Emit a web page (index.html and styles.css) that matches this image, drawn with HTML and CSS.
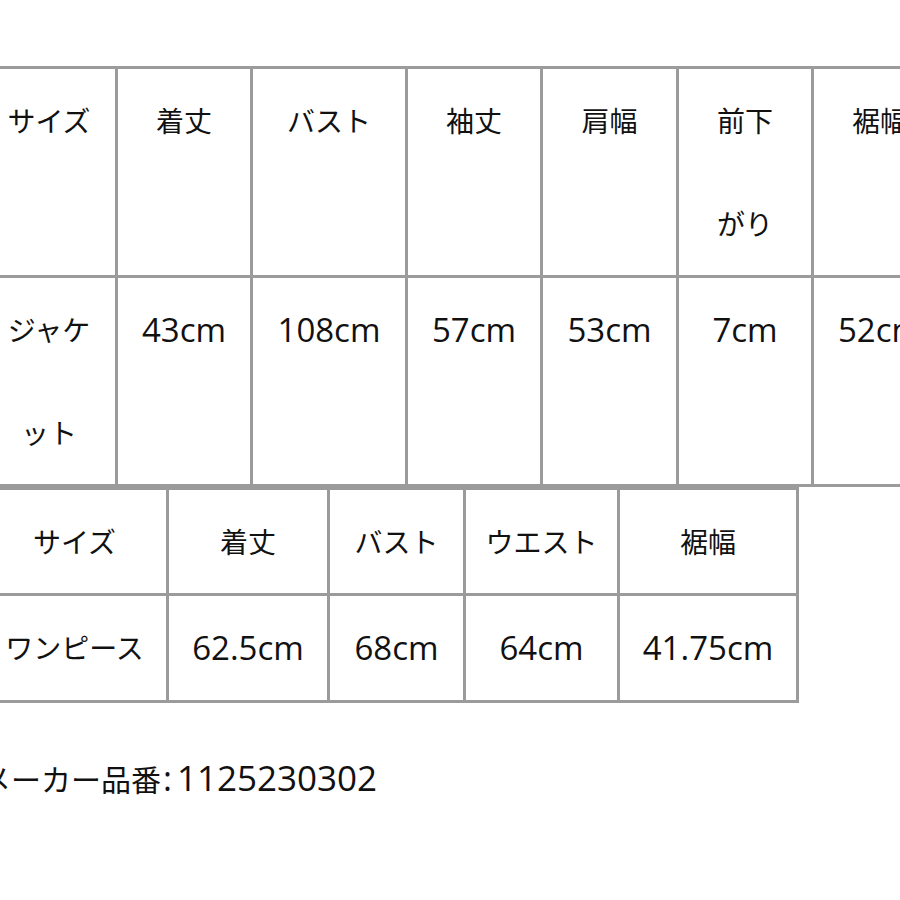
FILE: index.html
```html
<!DOCTYPE html>
<html lang="ja">
<head>
<meta charset="utf-8">
<title>サイズ表</title>
<link rel="stylesheet" href="styles.css">
</head>
<body>
<div class="page">
  <div class="grid grid-jacket">
    <div class="cell">サイズ</div>
    <div class="cell">着丈</div>
    <div class="cell">バスト</div>
    <div class="cell">袖丈</div>
    <div class="cell">肩幅</div>
    <div class="cell">前下<br>がり</div>
    <div class="cell">裾幅</div>
    <div class="cell">ジャケ<br>ット</div>
    <div class="cell"><span class="n">43cm</span></div>
    <div class="cell"><span class="n">108cm</span></div>
    <div class="cell"><span class="n">57cm</span></div>
    <div class="cell"><span class="n">53cm</span></div>
    <div class="cell"><span class="n">7cm</span></div>
    <div class="cell"><span class="n">52cm</span></div>
  </div>
  <div class="grid grid-dress">
    <div class="cell">サイズ</div>
    <div class="cell">着丈</div>
    <div class="cell">バスト</div>
    <div class="cell">ウエスト</div>
    <div class="cell">裾幅</div>
    <div class="cell">ワンピース</div>
    <div class="cell"><span class="n">62.5cm</span></div>
    <div class="cell"><span class="n">68cm</span></div>
    <div class="cell"><span class="n">64cm</span></div>
    <div class="cell"><span class="n">41.75cm</span></div>
  </div>
  <p class="maker">メーカー品番<span class="n colon">:</span><span class="n code">1125230302</span></p>
</div>
</body>
</html>
```

FILE: styles.css
```css
html, body {
  margin: 0;
  padding: 0;
  background: #fff;
  overflow: hidden;
}

body {
  width: 900px;
  height: 900px;
  font-family: "Noto Sans CJK JP", "DejaVu Sans", sans-serif;
  color: #111;
}

.page {
  padding-top: 66px;
  margin-left: -20px;
  width: 1000px;
}

.grid {
  display: grid;
  border-top: 3px solid #9b9b9b;
  border-left: 3px solid #9b9b9b;
  width: max-content;
}

.grid-jacket {
  grid-template-columns: 135px 135px 155px 135px 136px 135px 135px;
}

.grid-dress {
  grid-template-columns: 186px 161px 136px 154px 179px;
}

.cell {
  box-sizing: border-box;
  border-right: 3px solid #9b9b9b;
  border-bottom: 3px solid #9b9b9b;
  font-size: 28px;
  line-height: 103px;
  text-align: center;
  white-space: nowrap;
}

.n {
  font-family: "Open Sans", "Noto Sans CJK JP", sans-serif;
  font-size: 33px;
}

.maker {
  margin: 54px 0 0 1px;
  font-size: 30px;
  line-height: 42px;
  white-space: nowrap;
}

.maker .colon {
  font-size: 34px;
  margin-left: 2px;
}

.maker .code {
  font-size: 35px;
  margin-left: 5px;
}
```
